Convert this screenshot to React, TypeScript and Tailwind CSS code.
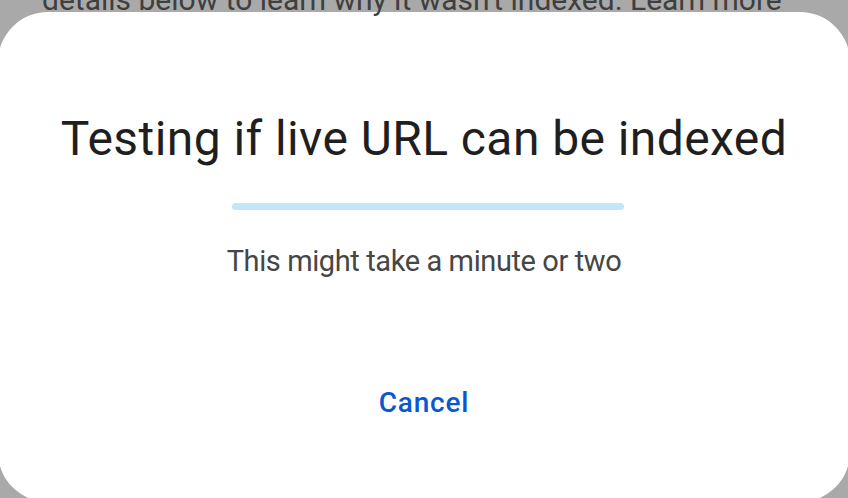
export default function App() {
  return (
    <div className="h-[498px] w-[848px] overflow-hidden bg-[#a9a9a9]" style={{ fontFamily: "Roboto, 'Noto Sans', sans-serif" }}>
      <p className="-mt-[18px] h-[36px] whitespace-nowrap pl-[42px] text-[30px] leading-[36px] text-[#3f3f3f]">
        details below to learn why it wasn't indexed. Learn more
      </p>
      <div className="-mt-[6px] ml-[-2px] flex h-[490px] w-[852px] flex-col items-center rounded-[50px] bg-white pt-[99px]">
        <h1 className="whitespace-nowrap text-[48px] font-normal leading-[56px] tracking-[0.42px] text-[#1f1f1f]">
          Testing if live URL can be indexed
        </h1>
        <div className="mt-[36px] h-[7px] w-[392px] translate-x-[4px] rounded-full bg-[#c2e7fd]" />
        <p className="mt-[33px] whitespace-nowrap text-[29px] leading-[36px] tracking-[-0.4px] text-[#444746]">
          This might take a minute or two
        </p>
        <button className="mt-[106px] text-[28px] font-medium leading-[36px] tracking-[0.8px] text-[#0b57d0]">
          Cancel
        </button>
      </div>
    </div>
  );
}
